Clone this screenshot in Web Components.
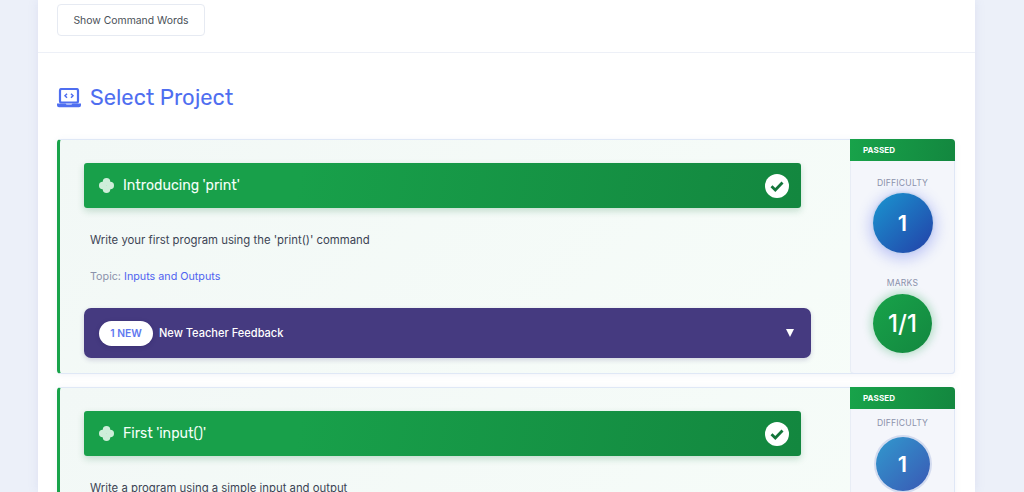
<!DOCTYPE html>
<html><head><meta charset="utf-8"><style>
html,body{margin:0;height:492px;overflow:hidden;background:#ecf0f9;font-family:"Inter","Liberation Sans",sans-serif}
</style></head><body>
<app-page>
  <cmd-bar></cmd-bar>
  <section-title>Select Project</section-title>
  <project-card title-text="Introducing 'print'" desc="Write your first program using the 'print()' command" topic="Inputs and Outputs" feedback marks="1/1"></project-card>
  <project-card class="second" title-text="First 'input()'" desc="Write a program using a simple input and output" topic="Inputs and Outputs" faded marks="1/1"></project-card>
</app-page>
<script>
function def(name,html){customElements.define(name,class extends HTMLElement{connectedCallback(){if(this.shadowRoot)return;const r=this.attachShadow({mode:'open'});r.innerHTML=typeof html==='function'?html(this):html;}})}
def('app-page',`<style>
:host{display:block;width:937px;margin-left:38px;height:492px;overflow:hidden;background:#fff;box-shadow:0 0 10px rgba(120,130,190,.13)}
</style><slot></slot>`);
def('cmd-bar',`<style>
:host{display:block;padding:4px 19px 16px;border-bottom:1px solid #edf0f7}
button{display:block;width:148px;height:32px;padding:0;background:#fff;border:1px solid #e6eaf2;border-radius:4px;font:400 10.4px "Inter",sans-serif;color:#495057}
</style><button>Show Command Words</button>`);
def('section-title',`<style>
:host{display:flex;align-items:center;gap:9px;padding:31px 19px 27px;height:28px;color:#4f6ef0;font:400 22px/28px "Rubik","Inter",sans-serif}
svg{width:24px;height:20px;flex:none}
</style><svg viewBox="0 0 24 20"><rect x="3" y="1" width="18" height="13.500" rx="1.500" fill="none" stroke="#4f6ef0" stroke-width="2.200"/><path d="M0 15.500h8.500l1 1h5l1-1H24v1.700a2 2 0 0 1-2 2H2a2 2 0 0 1-2-2z" fill="#4f6ef0"/><path d="M10 5.800l-2 2 2 2M14 5.800l2 2-2 2" fill="none" stroke="#4f6ef0" stroke-width="1.500"/></svg><slot></slot>`);
def('rating-circle',h=>{const k=h.getAttribute('kind');return `<style>
:host{display:flex;flex-direction:column;align-items:center}
.l{font:400 8.600px/12px "Inter",sans-serif;color:#8b92ab;letter-spacing:.2px}
.c{width:59px;height:59px;border-radius:50%;display:flex;align-items:center;justify-content:center;color:#fff;font:500 24px "Inter",sans-serif;margin-top:5px}
.blue{width:60px;height:60px;margin-top:4px;font-weight:600;font-size:22px;background:linear-gradient(135deg,#1a96d0,#2340a8);box-shadow:0 0 2px 1px #c4d2ec,0 3px 14px 3px rgba(80,100,240,.32)}
.green{background:linear-gradient(135deg,#18a34a,#13873f);box-shadow:0 0 8px 2px rgba(24,163,74,.3)}
.faded{font-weight:600;font-size:22px;background:linear-gradient(135deg,#3199ce,#3a58b4);box-shadow:0 0 0 2px #d3dbef;width:54px;height:54px;margin-top:8px}
</style><div class="l">${h.getAttribute('label')}</div><div class="c ${k}">${h.getAttribute('value')}</div>`});
def('project-card',h=>{const f=h.hasAttribute('feedback'),fa=h.hasAttribute('faded');const clover=`<svg class="clover" viewBox="0 0 16 16" fill="#cfeeda"><circle cx="8" cy="4" r="4"/><circle cx="8" cy="12" r="4"/><circle cx="4" cy="8" r="4"/><circle cx="12" cy="8" r="4"/></svg>`;
return `<style>
:host{margin:0 20px 13px 19px;height:235px;box-sizing:border-box;border:1px solid #dfe8f6;border-left:3px solid #18a34a;border-radius:4px;background:linear-gradient(135deg,#f2f8f6,#f7fdf9);box-shadow:0 1px 6px rgba(120,140,190,.1);display:flex}
.main{flex:1;min-width:0;padding:23px 0 15px 24px}
.bar{height:45px;width:717px;box-sizing:border-box;padding:0 12px 0 15px;display:flex;align-items:center;gap:9px;border-radius:3px;background:linear-gradient(100deg,#18a04a,#18a04a 30%,#13873f);box-shadow:0 3px 7px rgba(20,120,60,.22);color:#f4fff8;font:400 14.100px "Rubik","Inter",sans-serif}
.clover{width:15px;height:15px;flex:none}
.t{flex:1}
.check{width:24px;height:24px;flex:none}
.desc{margin:25px 0 0 6px;font:400 11.350px/14px "Inter",sans-serif;color:#3c4454}
.topic{margin:23px 0 0 6px;font:400 10.750px/14px "Inter",sans-serif;color:#8b92ab}
.topic span{color:#4f63f0}
.fb{margin-top:24px;height:50px;width:727px;box-sizing:border-box;padding:0 16px 0 15px;background:#453a80;border-radius:7px;display:flex;align-items:center;gap:6px;color:#fff;font:500 11.050px "Inter",sans-serif;box-shadow:0 2px 5px rgba(60,50,120,.2)}
.pill{width:54px;height:25px;border-radius:13px;background:#fff;color:#6078f0;font:600 10.300px/25px "Inter",sans-serif;text-align:center;box-shadow:0 1px 4px rgba(30,20,80,.25)}
.grow{flex:1}
.tri{width:0;height:0;border-left:4px solid transparent;border-right:4px solid transparent;border-top:8px solid #fff;margin-right:1px}
aside{width:105px;flex:none;margin:-1px -1px -1px 0;border:1px solid #dfe7f6;border-top:0;border-radius:4px;border-left:1px solid #e8edf5;background:#f4f6fb;box-sizing:border-box;display:flex;flex-direction:column}
.pass{height:22px;margin:0 -1px;background:linear-gradient(100deg,#18a34a,#13873f);color:#fff;font:700 8px/22px "Inter",sans-serif;padding-left:13px;border-radius:0 4px 0 0;letter-spacing:.1px}
.stack{display:flex;flex-direction:column;gap:24px;padding-top:16px}
:host([faded]) .stack{padding-top:8px}
</style>
<div class="main">
<div class="bar">${clover}<span class="t">${h.getAttribute('title-text')}</span><svg class="check" viewBox="0 0 24 24"><circle cx="12" cy="12" r="12" fill="#fff"/><path d="M6.500 12.300l3.800 3.700 7.200-7.500" fill="none" stroke="#13753a" stroke-width="2.800"/></svg></div>
<div class="desc">${h.getAttribute('desc')}</div>
<div class="topic">Topic: <span>${h.getAttribute('topic')}</span></div>
${f?`<div class="fb"><span class="pill">1 NEW</span><span class="grow">New Teacher Feedback</span><span class="tri"></span></div>`:''}
</div>
<aside><div class="pass">PASSED</div><div class="stack">
<rating-circle kind="${fa?'faded':'blue'}" label="DIFFICULTY" value="1"></rating-circle>
<rating-circle kind="green" label="MARKS" value="${h.getAttribute('marks')}"></rating-circle>
</div></aside>`});
</script>
</body></html>
